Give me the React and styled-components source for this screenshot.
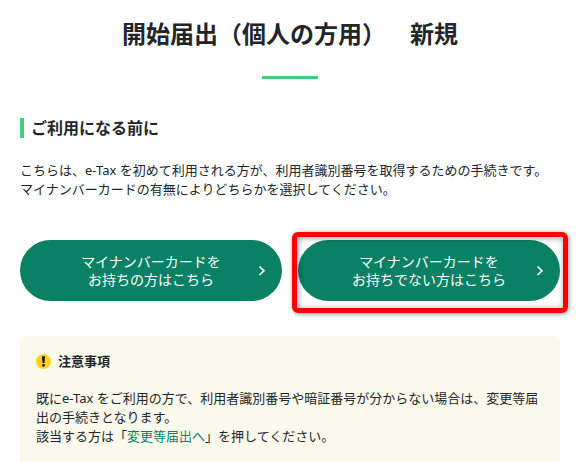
import styled, { createGlobalStyle } from "styled-components";

const GlobalStyle = createGlobalStyle`
  :root {
    --mainGreen: #0a8064;
    --accentGreen: #3fcf7f;
    --mainDark: #22262a;
    --noticeBg: #fbf9eb;
  }
  * {
    box-sizing: border-box;
  }
  body {
    margin: 0;
    background: #fff;
    color: var(--mainDark);
    font-family: "Noto Sans", "Noto Sans CJK JP", sans-serif;
    font-size: 13px;
    line-height: 19px;
    text-spacing-trim: space-all;
  }
`;

const Page = styled.main`
  padding: 16px 19px 0 20px;
`;

const PageTitle = styled.h1`
  margin: 0;
  font-size: 24px;
  line-height: 36px;
  text-align: center;
  &::after {
    content: "";
    display: block;
    width: 56px;
    height: 3px;
    margin: 24px auto 0;
    background: var(--accentGreen);
  }
`;

const SectionTitle = styled.h2`
  margin: 39px 0 23px;
  padding-left: 7px;
  border-left: 4px solid var(--accentGreen);
  font-size: 16px;
  line-height: 20px;
`;

const Text = styled.p`
  margin: 0;
`;

const ButtonRow = styled.div`
  display: grid;
  grid-template-columns: 1fr 1fr;
  gap: 16px;
  margin: 41px 0 35px;
`;

const ButtonCell = styled.div`
  position: relative;
  &::after {
    content: "";
    display: ${(props) => (props.$marked ? "block" : "none")};
    position: absolute;
    inset: -8px -8px -12px -6px;
    border: 5px solid #fe0000;
    border-radius: 6px;
    box-shadow: 1px 1px 5px rgba(0, 0, 0, 0.4),
      inset 1px 1px 6px rgba(0, 0, 0, 0.4);
    pointer-events: none;
  }
`;

const PillButton = styled.button`
  display: grid;
  grid-template-columns: 1fr auto 1fr;
  align-items: center;
  width: 100%;
  padding: 13px 16px 12px;
  border: none;
  border-radius: 31px;
  background: var(--mainGreen);
  color: #fff;
  font-family: inherit;
  font-size: 14px;
  line-height: 18px;
  cursor: pointer;
  span {
    grid-column: 2;
  }
  svg {
    justify-self: end;
  }
`;

const Notice = styled.section`
  padding: 16px 16px 32px;
  border-radius: 6px;
  background: var(--noticeBg);
`;

const NoticeTitle = styled.h3`
  display: flex;
  align-items: center;
  gap: 7px;
  margin: 0 0 18px;
  font-size: 13px;
  line-height: 19px;
`;

const TextLink = styled.a`
  color: var(--mainGreen);
  text-decoration: none;
  &:hover {
    text-decoration: underline;
  }
`;

const ArrowIcon = () => (
  <svg width="8" height="12" viewBox="0 0 8 12" fill="none" aria-hidden="true">
    <path d="M1.5 1.5L6 5.8L1.5 10" stroke="currentColor" strokeWidth="1.6" />
  </svg>
);

const AlertIcon = () => (
  <svg width="15" height="15" viewBox="0 0 15 15" aria-hidden="true">
    <circle cx="7.5" cy="7.5" r="7.5" fill="#ffd21f" />
    <path d="M6 2.2h3L8.5 9h-2z" fill="#111" />
    <circle cx="7.5" cy="11.3" r="1.4" fill="#111" />
  </svg>
);

const LinkButton = ({ marked, children }) => (
  <ButtonCell $marked={marked}>
    <PillButton type="button">
      <span>{children}</span>
      <ArrowIcon />
    </PillButton>
  </ButtonCell>
);

export default function App() {
  return (
    <Page lang="ja">
      <GlobalStyle />
      <PageTitle>開始届出（個人の方用）　新規</PageTitle>
      <SectionTitle>ご利用になる前に</SectionTitle>
      <Text>
        こちらは、e-Tax を初めて利用される方が、利用者識別番号を取得するための手続きです。
        <br />
        マイナンバーカードの有無によりどちらかを選択してください。
      </Text>
      <ButtonRow>
        <LinkButton>
          マイナンバーカードを
          <br />
          お持ちの方はこちら
        </LinkButton>
        <LinkButton marked>
          マイナンバーカードを
          <br />
          お持ちでない方はこちら
        </LinkButton>
      </ButtonRow>
      <Notice>
        <NoticeTitle>
          <AlertIcon />
          注意事項
        </NoticeTitle>
        <Text>
          既にe-Tax をご利用の方で、利用者識別番号や暗証番号が分からない場合は、変更等届出の手続きとなります。
          <br />
          該当する方は「<TextLink href="#henko">変更等届出へ</TextLink>」を押してください。
        </Text>
      </Notice>
    </Page>
  );
}
